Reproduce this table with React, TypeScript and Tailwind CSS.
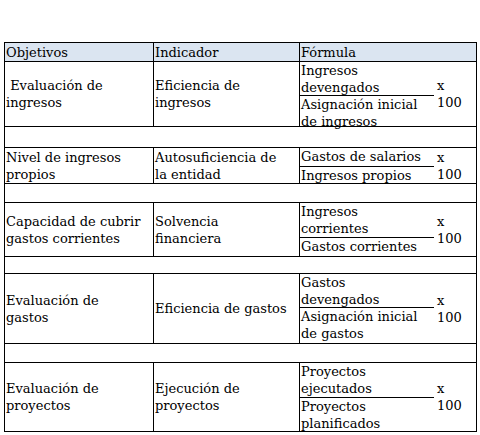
import React from "react";

type Row = {
  obj: string[];
  ind: string[];
  num: string[];
  den: string[];
  h: number;
  numH: number;
  denH: number;
};

const rows: Row[] = [
  { obj: ["\u00a0Evaluación de", "ingresos"], ind: ["Eficiencia de", "ingresos"], num: ["Ingresos", "devengados"], den: ["Asignación inicial", "de ingresos"], h: 64, numH: 33, denH: 30 },
  { obj: ["Nivel de ingresos", "propios"], ind: ["Autosuficiencia de", "la entidad"], num: ["Gastos de salarios"], den: ["Ingresos propios"], h: 35, numH: 18, denH: 16 },
  { obj: ["Capacidad de cubrir", "gastos corrientes"], ind: ["Solvencia", "financiera"], num: ["Ingresos", "corrientes"], den: ["Gastos corrientes"], h: 53, numH: 34, denH: 18 },
  { obj: ["Evaluación de", "gastos"], ind: ["Eficiencia de gastos"], num: ["Gastos", "devengados"], den: ["Asignación inicial", "de gastos"], h: 69, numH: 33, denH: 35 },
  { obj: ["Evaluación de", "proyectos"], ind: ["Ejecución de", "proyectos"], num: ["Proyectos", "ejecutados"], den: ["Proyectos", "planificados"], h: 68, numH: 34, denH: 33 },
];

const spacers = [20, 18, 16, 18];

function Lines({ items }: { items: string[] }) {
  return (
    <div>
      {items.map((t, j) => (
        <div key={j} className="whitespace-nowrap">{t}</div>
      ))}
    </div>
  );
}

export default function App() {
  return (
    <div
      className="w-[480px] h-[435px] bg-white text-black pt-[42px] pl-[4px] text-[13px] leading-[17px]"
      style={{ fontFamily: '"DejaVu Serif", serif' }}
    >
      <div className="w-[473px] border border-black">
        <div className="flex h-[19px] bg-[#dbe5f1] border-b border-black">
          <div className="w-[149px] border-r border-black pl-[1px] flex items-center">Objetivos</div>
          <div className="w-[146px] border-r border-black pl-[1px] flex items-center">Indicador</div>
          <div className="flex-1 pl-[1px] flex items-center">Fórmula</div>
        </div>
        {rows.map((r, i) => (
          <React.Fragment key={i}>
            <div className="flex border-black" style={{ height: r.h + (i < rows.length - 1 ? 1 : 0), borderBottomWidth: i < rows.length - 1 ? 1 : 0 }}>
              <div className="w-[149px] border-r border-black pl-[1px] flex items-center">
                <Lines items={r.obj} />
              </div>
              <div className="w-[146px] border-r border-black pl-[1px] flex items-center">
                <Lines items={r.ind} />
              </div>
              <div className="flex-1 flex">
                <div className="w-[134px] flex flex-col">
                  <div className="border-b border-black pl-[1px]" style={{ height: r.numH + 1 }}>
                    <Lines items={r.num} />
                  </div>
                  <div className="pl-[1px]" style={{ height: r.denH }}>
                    <Lines items={r.den} />
                  </div>
                </div>
                <div className="flex-1 flex flex-col justify-center pl-[3px]">
                  <div>x</div>
                  <div>100</div>
                </div>
              </div>
            </div>
            {i < spacers.length && (
              <div className="border-b border-black" style={{ height: spacers[i] + 1 }} />
            )}
          </React.Fragment>
        ))}
      </div>
    </div>
  );
}
